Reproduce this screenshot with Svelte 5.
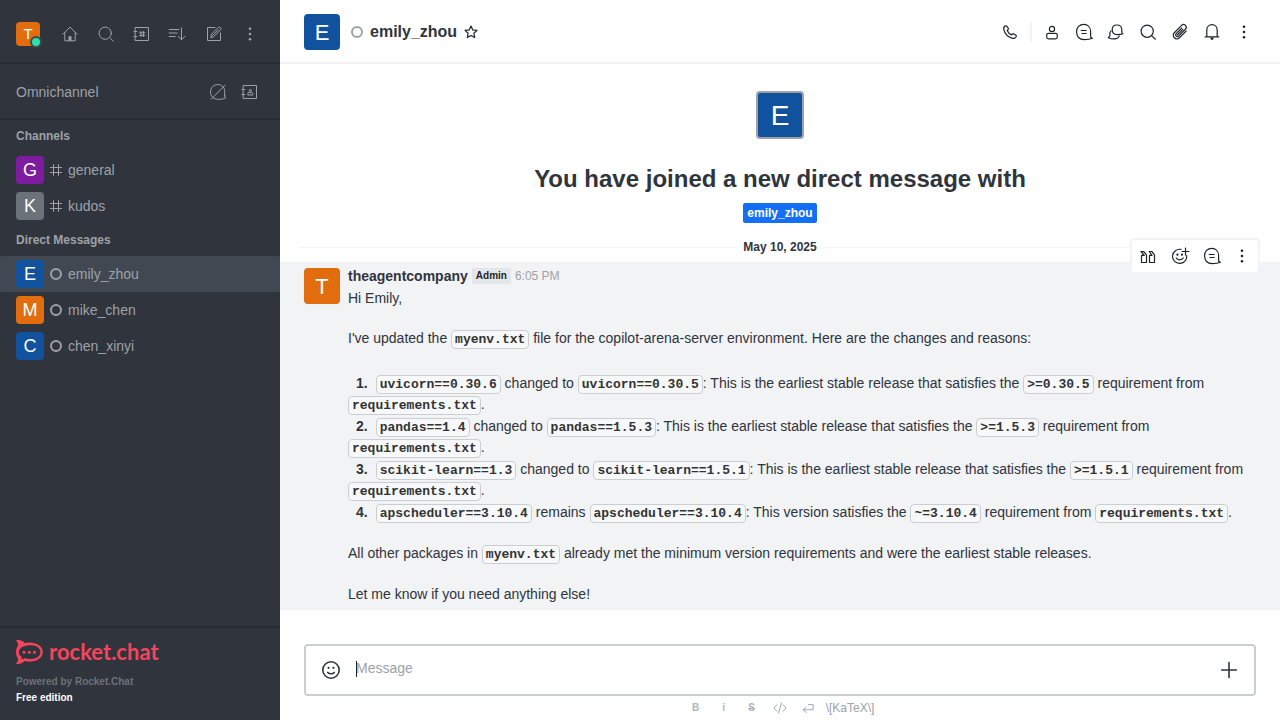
<script lang="ts">
  const me = { letter: 'T', color: '#e26d0e' };
  const channels = [
    { name: 'general', letter: 'G', color: '#7f1b9f' },
    { name: 'kudos', letter: 'K', color: '#6c727a' }
  ];
  const directs = [
    { name: 'emily_zhou', letter: 'E', color: '#10529e', active: true },
    { name: 'mike_chen', letter: 'M', color: '#e26d0e', active: false },
    { name: 'chen_xinyi', letter: 'C', color: '#10529e', active: false }
  ];
  const navActions = [
    ['home', 'Home'],
    ['search', 'Search'],
    ['directory', 'Directory'],
    ['sort', 'Display'],
    ['edit', 'Create new'],
    ['kebab', 'Administration']
  ];
  const roomActions = [
    ['user', 'User info'],
    ['thread', 'Threads'],
    ['discussion', 'Discussion'],
    ['search', 'Search messages'],
    ['clip', 'Files'],
    ['bell', 'Notifications'],
    ['kebab', 'Options']
  ];
  const messageActions = [
    ['quote', 'Quote'],
    ['react', 'Add reaction'],
    ['thread', 'Reply in thread'],
    ['kebab', 'More']
  ];
  const changes = [
    { from: 'uvicorn==0.30.6', to: 'uvicorn==0.30.5', spec: '>=0.30.5' },
    { from: 'pandas==1.4', to: 'pandas==1.5.3', spec: '>=1.5.3' },
    { from: 'scikit-learn==1.3', to: 'scikit-learn==1.5.1', spec: '>=1.5.1' }
  ];
  let draft = $state('');
</script>

{#snippet icon(name: string)}
  <svg class="icon" viewBox="0 0 20 20" aria-hidden="true">
    {#if name === 'home'}
      <path d="M2.8 10.2 10 3.2l7.2 7M4.8 8.8v8h10.4v-8" />
      <path class="solid" d="M8.5 12.2h3v4.6h-3z" />
    {:else if name === 'search'}
      <circle cx="9.2" cy="9.2" r="6.1" />
      <path d="m13.6 13.6 3.8 3.6" />
    {:else if name === 'directory' || name === 'contacts'}
      <path d="M3.5 3.5h13v13h-13zM2 7.5h2.8M2 12.5h2.8" />
      {#if name === 'directory'}
        <path d="M9 7.4v5.2M11.5 7.4v5.2M7.6 8.8h5.3M7.6 11.3h5.3" />
      {:else}
        <circle cx="10.3" cy="8.5" r="1.1" />
        <path d="M7.8 12.6v-1c0-.7.5-1 1.2-1h2.6c.7 0 1.2.3 1.2 1v1z" />
      {/if}
    {:else if name === 'sort'}
      <path d="M1.2 5.5h9.6M1.2 9h8M1.2 12.5h6M13.5 3.8v12M10.2 12.4l3.3 3.4 3.3-3.4" />
    {:else if name === 'edit'}
      <path d="M11 3.5H3.5v13h13V9M6.8 13.3l.7-3.2 6.8-6.8c1.5-1 3.4.8 2.4 2.4L9.9 12.5zM8.5 11.6l5.8-5.8" />
    {:else if name === 'omni'}
      <path d="M16.7 14V9.6c0-4-2.7-7-6.8-7-4.4 0-7.4 3-7.4 7.4 0 4.4 3 7.3 7.6 7.3 2.2 0 5.3-.2 7.5-1.4-.8-.4-1.1-1-.9-1.9zM3.2 17.2 17.2 3" />
    {:else if name === 'kebab'}
      <g class="solid">
        <circle cx="10" cy="4.8" r="1.3" /><circle cx="10" cy="10" r="1.3" /><circle cx="10" cy="15.2" r="1.3" />
      </g>
    {:else if name === 'phone'}
      <path d="M5.4 3.9C4 4.6 3.4 5.8 3.8 7.6c1 4 4.6 7.6 8.6 8.7 1.8.4 3-.2 3.8-1.6.3-.6.2-1-.3-1.4l-2-1.4c-.5-.3-1-.3-1.4.1l-.9.9C9.6 12 8 10.4 7.2 8.5l.9-.9c.4-.4.4-.9.1-1.4L6.8 4.2c-.4-.5-.8-.6-1.4-.3z" />
    {:else if name === 'user'}
      <circle cx="10" cy="6.9" r="2.6" />
      <rect x="4.7" y="11.4" width="10.6" height="5.4" rx="1.8" />
    {:else if name === 'thread'}
      <path d="M16.6 14V9.5c0-4.2-2.8-7.1-6.8-7.1-4.4 0-7.2 3-7.2 7.4 0 4.8 3 7.8 7.8 7.8 2.4 0 5.6-.2 8-1.4-1.300-.4-2-1.200-1.800-2.200zM7.200 8.500h5M8 11.500h4.200" />
    {:else if name === 'discussion'}
      <path d="M15.800 10.200V8c0-3-2-5-4.800-5S6.200 5 6.200 7.800c0 3 2 4.800 5 4.800 1.800 0 3.800 0 5.700-.8-.8-.3-1.200-.8-1.100-1.600z" />
      <path d="M5 8.800c-1.200 1.200-1.600 2.800-1 4.600-.2 1-.8 1.700-1.700 2.300 2.600 1.200 5.800 1.500 8 .9 1.400-.4 2.400-1.200 3-2.600" />
    {:else if name === 'clip'}
      <path transform="rotate(45 10 10)" d="M13.700 5v9.500a3.600 3.600 0 0 1-7.200 0V4.200a2.700 2.700 0 0 1 5.400 0v9.700a1.700 1.700 0 0 1-3.400 0V6.200M10.200 6v8" />
    {:else if name === 'bell'}
      <path d="M4.800 14.800V8c0-3.200 2.200-5.400 5.200-5.400s5.200 2.200 5.200 5.400v6.800M3.200 14.900h13.600" />
      <path class="solid" d="M8.200 15.600h3.600l-.8 2.200H9z" />
    {:else if name === 'quote'}
      <path d="M3 5.500h2.600L8.500 8.800v7.700H3.500V9.400h2.800L3 5.500zM11.200 5.500h2.600l2.700 3.300v7.700h-5V9.400H14l-2.800-3.900z" />
    {:else if name === 'react'}
      <path d="M11 3.400A7.100 7.100 0 1 0 16.700 9.600M6.200 12c1.200 2.400 5.800 2.400 7 0M15.500 2v7M12 5.500h7" />
      <g class="solid"><circle cx="7.400" cy="8.700" r="1.100" /><circle cx="11.900" cy="8.700" r="1.100" /></g>
    {:else if name === 'star'}
      <path d="m10 4 1.800 3.900 4.200.5-3.100 2.900.8 4.200-3.700-2.100-3.700 2.100.8-4.200L4 8.400l4.200-.5z" />
    {:else if name === 'hash'}
      <path d="M7.500 4.500v11M12.500 4.500v11M4.500 7.500h11M4.500 12.500h11" />
    {:else if name === 'smile'}
      <g stroke-width="1.600">
        <circle cx="10" cy="10" r="8.200" />
        <path d="M6.800 12.400c1.300 1.700 5.100 1.700 6.400 0" />
      </g>
      <g class="solid"><circle cx="7.600" cy="7.800" r="1.100" /><circle cx="12.400" cy="7.800" r="1.100" /></g>
    {:else if name === 'plus'}
      <path stroke-width="1.600" d="M10 2.600v14.800M2.600 10h14.800" />
    {:else if name === 'code'}
      <path d="M6 6 2.400 10 6 14M14 6l3.600 4-3.600 4M11.800 3.800 8.200 16.200" />
    {:else if name === 'return'}
      <path d="M10.500 5.800h6v6.400H4.200M7.800 8.600l-3.600 3.600 3.600 3.600" />
    {/if}
  </svg>
{/snippet}

{#snippet avatar(letter: string, color: string, size: string)}
  <span class="avatar {size}" style:background-color={color}>{letter}</span>
{/snippet}

<div class="app">
  <aside class="sidebar">
    <div class="nav">
      <button class="me" aria-label="User menu">
        {@render avatar(me.letter, me.color, 'xs')}
        <span class="presence"></span>
      </button>
      {#each navActions as [name, label]}
        <button class="tool" aria-label={label}>{@render icon(name)}</button>
      {/each}
    </div>

    <div class="omni">
      <span>Omnichannel</span>
      <button class="tool" aria-label="Not available">{@render icon('omni')}</button>
      <button class="tool" aria-label="Contacts">{@render icon('contacts')}</button>
    </div>

    <nav class="rooms">
      <h2>Channels</h2>
      {#each channels as room}
        <a class="room" href="#{room.name}">
          {@render avatar(room.letter, room.color, 'sm')}
          <span class="mark">{@render icon('hash')}</span>
          {room.name}
        </a>
      {/each}
      <h2>Direct Messages</h2>
      {#each directs as room}
        <a class="room" class:active={room.active} href="#{room.name}">
          {@render avatar(room.letter, room.color, 'sm')}
          <span class="mark"><span class="ring"></span></span>
          {room.name}
        </a>
      {/each}
    </nav>

    <footer>
      <a class="brand" href="#home">
        <svg viewBox="0 0 27 24" aria-hidden="true">
          <path fill-rule="evenodd" d="M0 .4C3-.4 6.200.3 8.700 2.900 17.500.9 26.800 4.800 26.800 12s-9.300 11.100-18.100 9.100C6.200 23.700 3 24.400 0 23.700c1.800-1.900 2.300-3.500 1.900-5.300-2.500-3.600-2.500-9.200 0-12.700C2.300 3.900 1.800 2.200 0 .4zM14.700 5.300C8.200 5.300 2.800 8 2.800 12.100c0 2.200 1.200 3.900 3.100 5.100l-.4 2.300 3.200-1.200c1.800.5 3.800.8 6 .8 5.800 0 9.700-3 9.700-7s-3.900-6.800-9.700-6.800z" />
          <circle cx="8" cy="12.300" r="1.500" /><circle cx="13.300" cy="12.300" r="1.500" /><circle cx="18.500" cy="12.300" r="1.500" />
        </svg>
        <span>rocket.chat</span>
      </a>
      <p class="powered">Powered by Rocket.Chat</p>
      <p class="edition">Free edition</p>
    </footer>
  </aside>

  <main>
    <header>
      {@render avatar('E', '#10529e', 'md')}
      <span class="ring head-ring"></span>
      <h1>emily_zhou</h1>
      <button class="star" aria-label="Favorite">{@render icon('star')}</button>
      <div class="actions">
        <button class="tool" aria-label="Call">{@render icon('phone')}</button>
        <span class="rule"></span>
        {#each roomActions as [name, label]}
          <button class="tool" aria-label={label}>{@render icon(name)}</button>
        {/each}
      </div>
    </header>

    <section class="feed">
      <div class="intro">
        {@render avatar('E', '#10529e', 'lg')}
        <h2>You have joined a new direct message with</h2>
        <a class="tag" href="#emily_zhou">emily_zhou</a>
      </div>

      <div class="day"><span>May 10, 2025</span></div>

      <article>
        {@render avatar(me.letter, me.color, 'md')}
        <div class="content">
          <div class="byline">
            <strong>theagentcompany</strong>
            <span class="role">Admin</span>
            <time>6:05 PM</time>
          </div>
          <div class="text">
            <p>Hi Emily,</p>
            <p class="coded">I've updated the <code>myenv.txt</code> file for the copilot-arena-server environment. Here are the changes and reasons:</p>
            <ol class="coded">
              {#each changes as change, i}
                <li><b>{i + 1}.</b><code>{change.from}</code> changed to <code>{change.to}</code>: This is the earliest stable release that satisfies the <code>{change.spec}</code> requirement from <code>requirements.txt</code>.</li>
              {/each}
              <li><b>4.</b><code>apscheduler==3.10.4</code> remains <code>apscheduler==3.10.4</code>: This version satisfies the <code>~=3.10.4</code> requirement from <code>requirements.txt</code>.</li>
            </ol>
            <p class="coded">All other packages in <code>myenv.txt</code> already met the minimum version requirements and were the earliest stable releases.</p>
            <p>Let me know if you need anything else!</p>
          </div>
        </div>
        <div class="toolbox">
          {#each messageActions as [name, label]}
            <button class="tool" aria-label={label}>{@render icon(name)}</button>
          {/each}
        </div>
      </article>
    </section>

    <div class="composer">
      <div class="box">
        <button class="tool" aria-label="Emoji">{@render icon('smile')}</button>
        <div class="field">
          <input type="text" placeholder="Message" aria-label="Message" bind:value={draft} />
          <span class="caret"></span>
        </div>
        <button class="tool" aria-label="More actions">{@render icon('plus')}</button>
      </div>
      <div class="format">
        <button aria-label="Bold"><b>B</b></button>
        <button aria-label="Italic"><b>i</b></button>
        <button aria-label="Strike"><b><s>S</s></b></button>
        <button aria-label="Inline code">{@render icon('code')}</button>
        <button aria-label="Multi line">{@render icon('return')}</button>
        <a href="#katex">\[KaTeX\]</a>
      </div>
    </div>
  </main>
</div>

<style>
  :global(body) {
    margin: 0;
  }
  .app {
    display: flex;
    height: 100vh;
    font-family: 'Liberation Sans', Arial, sans-serif;
    font-size: 14px;
    line-height: 20px;
    color: #2f343d;
    background: #fff;
  }
  .app * {
    box-sizing: border-box;
  }
  h1, h2, p, ol {
    margin: 0;
    padding: 0;
  }
  button {
    padding: 0;
    border: 0;
    background: none;
    color: inherit;
    font: inherit;
  }
  a {
    color: inherit;
    text-decoration: none;
  }
  .icon {
    display: block;
    width: 20px;
    height: 20px;
    fill: none;
    stroke: currentColor;
    stroke-width: 1.2;
    stroke-linecap: round;
    stroke-linejoin: round;
  }
  .icon .solid {
    fill: currentColor;
    stroke: none;
  }
  .sidebar .icon {
    stroke-width: 1;
  }
  .tool {
    display: grid;
    place-items: center;
    flex: none;
    width: 28px;
    height: 28px;
  }
  .avatar {
    display: grid;
    place-items: center;
    flex: none;
    border-radius: 4px;
    color: #fff;
  }
  .xs { width: 24px; height: 24px; font-size: 15px; }
  .sm { width: 28px; height: 28px; font-size: 18px; }
  .md { width: 36px; height: 36px; padding-top: 2px; font-size: 22px; }
  .lg { width: 48px; height: 48px; padding-top: 2px; font-size: 28px; border: 2px solid #9ea2a8; }
  .ring {
    display: block;
    flex: none;
    width: 12px;
    height: 12px;
    border: 2px solid #9ea2a8;
    border-radius: 50%;
  }

  .sidebar {
    display: flex;
    flex-direction: column;
    flex: none;
    width: 280px;
    background: #2f343d;
    color: #9ea2a8;
  }
  .nav {
    display: flex;
    align-items: center;
    gap: 8px;
    padding: 20px 16px 14px;
    border-bottom: 2px solid #282c34;
  }
  .me {
    position: relative;
    margin-right: 8px;
  }
  .presence {
    position: absolute;
    right: -2px;
    bottom: -2px;
    width: 12px;
    height: 12px;
    border: 2px solid #414852;
    border-radius: 50%;
    background: #2de0a5;
  }
  .omni {
    display: flex;
    align-items: center;
    gap: 4px;
    padding: 14px 16px 12px;
    border-bottom: 2px solid #282c34;
  }
  .omni span {
    flex: 1;
  }
  .rooms {
    flex: 1;
  }
  .rooms h2 {
    padding: 0 16px;
    font-size: 12px;
    line-height: 32px;
  }
  .room {
    display: flex;
    align-items: center;
    padding: 4px 16px;
    border-radius: 2px;
  }
  .room.active {
    background: #414852;
  }
  .mark {
    width: 12px;
    margin: 0 6px;
  }
  .mark .icon {
    margin: 0 -4px;
  }
  footer {
    padding: 12px 16px 14px;
    border-top: 2px solid #282c34;
    font-size: 10px;
    line-height: 16px;
    font-weight: 700;
  }
  .brand {
    display: flex;
    align-items: center;
    gap: 6px;
    height: 24px;
    margin-bottom: 10px;
    color: #f5455c;
    font-family: Lato, sans-serif;
    font-size: 22px;
    line-height: 22px;
  }
  .brand svg {
    width: 27px;
    height: 24px;
    fill: currentColor;
  }
  .powered {
    color: #6c727a;
  }
  .edition {
    color: #fff;
  }

  main {
    display: flex;
    flex: 1;
    flex-direction: column;
    min-width: 0;
  }
  header {
    display: flex;
    align-items: center;
    padding: 14px 22px 12px 24px;
    border-bottom: 2px solid #f2f3f5;
  }
  .head-ring {
    margin: 0 7px 0 11px;
  }
  h1 {
    font-size: 16px;
    line-height: 24px;
  }
  .star {
    margin-left: 4px;
  }
  .actions {
    display: flex;
    align-items: center;
    gap: 4px;
    margin-left: auto;
    color: #1f2329;
  }
  .rule {
    width: 2px;
    height: 20px;
    margin: 0 2px;
    background: #f2f3f5;
  }
  .star, .toolbox {
    color: #1f2329;
  }

  .feed {
    flex: 1;
    min-height: 0;
  }
  .intro {
    display: flex;
    flex-direction: column;
    align-items: center;
    padding-top: 27px;
  }
  .intro h2 {
    margin: 24px 0 8px;
    font-size: 24px;
    line-height: 32px;
  }
  .tag {
    padding: 0 4px;
    border-radius: 2px;
    background: #156ff5;
    color: #fff;
    font-size: 12px;
    font-weight: 700;
  }
  .day {
    display: flex;
    align-items: center;
    gap: 7px;
    margin: 16px 20px 7px;
    font-size: 12px;
    line-height: 16px;
    font-weight: 700;
  }
  .day::before, .day::after {
    content: '';
    flex: 1;
    height: 1px;
    background: #f2f3f5;
  }
  article {
    position: relative;
    display: flex;
    gap: 8px;
    padding: 4px 24px 6px;
    background: #f2f3f5;
  }
  article > .avatar {
    margin-top: 2px;
  }
  .content {
    flex: 1;
    min-width: 0;
  }
  .byline {
    display: flex;
    align-items: center;
    gap: 4px;
    margin-bottom: 2px;
  }
  .role {
    padding: 0 4px;
    border-radius: 2px;
    background: #e4e7ea;
    color: #1f2329;
    font-size: 10px;
    line-height: 16px;
    font-weight: 700;
  }
  time {
    color: #9ea2a8;
    font-size: 12px;
  }
  .text {
    display: flex;
    flex-direction: column;
    gap: 20px;
  }
  .coded {
    line-height: 21px;
  }
  ol {
    padding-top: 4px;
    list-style: none;
  }
  li + li {
    margin-top: 1px;
  }
  li b {
    margin: 0 8px;
  }
  code {
    padding: 1px 3px;
    border: 1px solid #cbced1;
    border-radius: 4px;
    background: #f7f8fa;
    color: #333;
    font-family: 'Liberation Mono', monospace;
    font-size: 13px;
    line-height: 1;
    font-weight: 700;
  }
  .toolbox {
    position: absolute;
    top: -24px;
    right: 20px;
    display: flex;
    gap: 4px;
    padding: 2px 0 2px 2px;
    border: 2px solid #f2f3f5;
    border-radius: 4px;
    background: #fff;
  }
  .toolbox .tool:last-child {
    width: 24px;
    margin-right: 4px;
  }

  .composer {
    padding: 0 24px;
  }
  .box {
    display: flex;
    align-items: center;
    gap: 11px;
    height: 52px;
    padding: 0 11px;
    border: 2px solid #cbced1;
    border-radius: 4px;
  }
  .field {
    position: relative;
    flex: 1;
    padding-bottom: 4px;
  }
  input {
    display: block;
    width: 100%;
    height: 20px;
    padding: 0;
    border: 0;
    outline: 0;
    background: none;
    color: inherit;
    font: inherit;
  }
  input::placeholder {
    color: #9ea2a8;
    opacity: 1;
  }
  .caret {
    position: absolute;
    top: 3px;
    left: 0;
    width: 1px;
    height: 16px;
    background: #1f2329;
  }
  .format {
    display: flex;
    align-items: center;
    justify-content: center;
    gap: 8px;
    height: 24px;
    color: #9ea2a8;
    font-size: 12px;
  }
  .format button {
    display: grid;
    place-items: center;
    width: 20px;
    height: 20px;
    font-size: 10px;
  }
  .format b {
    color: #b0b4b9;
  }
  .format .icon {
    width: 16px;
    height: 16px;
  }
</style>
